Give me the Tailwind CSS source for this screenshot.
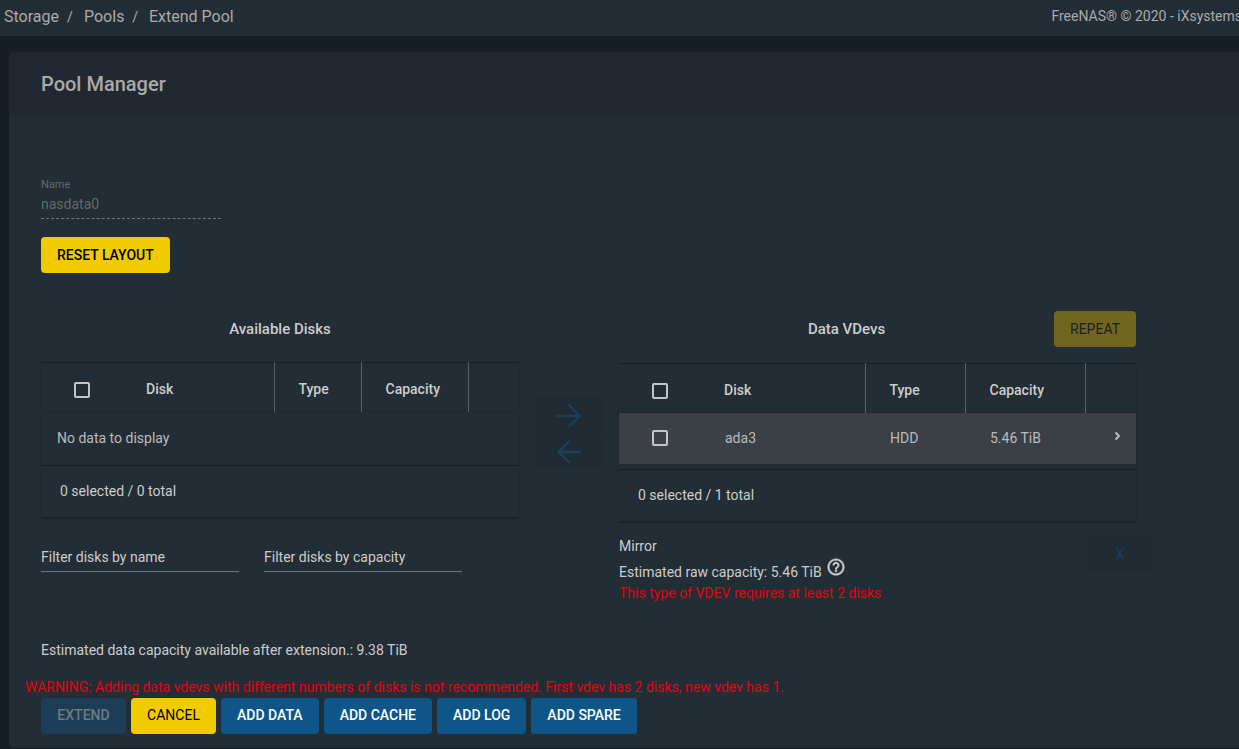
<!DOCTYPE html>
<html lang="en">
<head>
    <meta charset="UTF-8">
    <meta name="viewport" content="width=device-width, initial-scale=1.0">
    <title>FreeNAS - Extend Pool</title>
    <script src="https://cdn.jsdelivr.net/npm/@tailwindcss/browser@4"></script>
</head>
<body class="bg-[#171e26] min-h-screen overflow-x-hidden font-[Roboto,sans-serif] text-sm leading-5 text-[#cccccc]">
    <!-- Breadcrumb bar -->
    <header class="flex h-9 items-center justify-between overflow-hidden bg-[#232d35] pl-1 pb-[2px] text-[#aaaaaa] shadow-sm">
        <nav aria-label="Breadcrumb" class="flex text-base">
            <a href="#" class="w-20 shrink-0">Storage <span class="pl-1 text-sm">/</span></a>
            <a href="#" class="w-[65px] shrink-0">Pools <span class="pl-1 text-sm">/</span></a>
            <a href="#" class="whitespace-nowrap">Extend Pool</a>
        </nav>
        <p class="-mr-[3px] pb-[2px] whitespace-nowrap">FreeNAS® © 2020 - iXsystems</p>
    </header>

    <main class="ml-[9px] mt-4 rounded-l-md bg-[#232d35]">
        <div class="flex h-16 items-center rounded-tl-md bg-[#212831] px-8">
            <h1 class="text-xl font-medium text-[#aaaaaa]">Pool Manager</h1>
        </div>

        <div class="px-8 pt-[61px] pb-[14px]">
            <div class="flex w-[180px] flex-col">
                <label for="poolName" class="text-[11px] leading-4 text-[#646a6e]">Name</label>
                <input type="text" id="poolName" value="nasdata0" disabled class="h-[26px] border-b border-dashed border-[#71777b] pb-[3px] text-[#646a6e]">
            </div>
            <button type="button" class="mt-[18px] h-9 rounded bg-[#f0cb00] px-4 font-medium text-black">RESET LAYOUT</button>

            <div class="mt-[38px] mr-[71px] grid grid-cols-[478fr_66fr_517fr] gap-x-[17px]">
                <!-- Available disks -->
                <section>
                    <h2 class="text-center text-[15px] leading-9 font-medium">Available Disks</h2>
                    <div class="mt-[15px] shadow-[0_2px_2px_rgba(0,0,0,0.25)]">
                        <table class="w-full table-fixed border-t border-[#171e26] text-left">
                            <thead>
                                <tr class="h-[49px]">
                                    <th class="w-[81px] pt-[5px] pl-[33px]"><input type="checkbox" aria-label="Select all available disks" class="block size-4 appearance-none rounded-xs border-2 border-[#c4c4c4]"></th>
                                    <th class="border-r border-[#596066] pl-6 pt-1 font-medium">Disk</th>
                                    <th class="w-[87px] border-r border-[#596066] pl-6 pt-1 font-medium">Type</th>
                                    <th class="w-[107px] border-r border-[#596066] pl-6 pt-1 font-medium">Capacity</th>
                                    <td class="w-[51px]"></td>
                                </tr>
                            </thead>
                            <tbody>
                                <tr class="h-[54px] border-t border-[#1f272f]">
                                    <td colspan="5" class="pl-4 pb-px text-[#bbbbbb]">No data to display</td>
                                </tr>
                            </tbody>
                            <tfoot>
                                <tr class="h-[51px] border-t border-[#171e26]">
                                    <td colspan="5" class="pl-[19px]">0 selected / 0 total</td>
                                </tr>
                            </tfoot>
                        </table>
                    </div>
                    <div class="mt-[26px] flex gap-[25px]">
                        <input type="text" aria-label="Filter disks by name" placeholder="Filter disks by name" class="h-[29px] w-[198px] min-w-0 border-b border-[#6c7276] placeholder:text-[#cccccc]">
                        <input type="text" aria-label="Filter disks by capacity" placeholder="Filter disks by capacity" class="h-[29px] w-[198px] min-w-0 border-b border-[#6c7276] placeholder:text-[#cccccc]">
                    </div>
                </section>

                <!-- Move buttons -->
                <div class="flex flex-col pt-[86px]">
                    <button type="button" disabled aria-label="Add to vdev" class="flex h-9 items-center justify-center rounded bg-[#212b33] text-[#1b405a]">
                        <svg class="size-6" viewBox="0 0 24 24" fill="none" stroke="currentColor" stroke-width="2.4">
                            <path d="M0 13h23M11.500 1.500l11 11.500l-11 11"/>
                        </svg>
                    </button>
                    <button type="button" disabled aria-label="Remove from vdev" class="flex h-9 items-center justify-center rounded bg-[#212b33] text-[#1b405a]">
                        <svg class="size-6" viewBox="0 0 24 24" fill="none" stroke="currentColor" stroke-width="2.4">
                            <path d="M24 13H2M13 1.500L1.500 13l11.500 11"/>
                        </svg>
                    </button>
                </div>

                <!-- Data vdevs -->
                <section>
                    <div class="flex">
                        <h2 class="flex-1 pl-5 text-center text-[15px] leading-9 font-medium">Data VDevs</h2>
                        <button type="button" disabled class="h-9 rounded bg-[#70661f] px-4 text-[#1b211f]">REPEAT</button>
                    </div>
                    <div class="mt-4 shadow-[0_2px_2px_rgba(0,0,0,0.25)]">
                        <table class="w-full table-fixed border-t border-[#171e26] text-left">
                            <thead>
                                <tr class="h-[49px]">
                                    <th class="w-[81px] pt-[5px] pl-[33px]"><input type="checkbox" aria-label="Select all vdev disks" class="block size-4 appearance-none rounded-xs border-2 border-[#c4c4c4]"></th>
                                    <th class="border-r border-[#596066] pl-6 pt-1 font-medium">Disk</th>
                                    <th class="w-[100px] border-r border-[#596066] pl-6 pt-1 font-medium">Type</th>
                                    <th class="w-[120px] border-r border-[#596066] pl-6 pt-1 font-medium">Capacity</th>
                                    <td class="w-[51px]"></td>
                                </tr>
                            </thead>
                            <tbody>
                                <tr class="h-[51px] border-t border-[#1f272f] bg-[#3a4046] text-[#bbbbbb]">
                                    <td class="pl-[33px]"><input type="checkbox" aria-label="Select ada3" class="block size-4 appearance-none rounded-xs border-2 border-[#c4c4c4]"></td>
                                    <td class="pl-[25px]">ada3</td>
                                    <td class="pl-[25px]">HDD</td>
                                    <td class="pl-[25px]">5.46 TiB</td>
                                    <td class="pb-1">
                                        <button type="button" aria-label="Expand ada3" class="ml-[27px] block">
                                            <svg class="h-[10px] w-3" viewBox="0 0 12 10" fill="none" stroke="currentColor" stroke-width="2">
                                                <path d="M3.5 1.5L7 5L3.5 8.5"/>
                                            </svg>
                                        </button>
                                    </td>
                                </tr>
                                <tr class="h-[6px]"><td colspan="5"></td></tr>
                            </tbody>
                            <tfoot>
                                <tr class="h-[51px] border-t border-[#171e26]">
                                    <td colspan="5" class="pl-[19px]">0 selected / 1 total</td>
                                </tr>
                            </tfoot>
                        </table>
                    </div>
                    <div class="-mr-4 mt-[15px] flex items-start justify-between">
                        <div>
                            <p>Mirror</p>
                            <div class="flex h-[27px] gap-1">
                                <p class="self-end pb-px">Estimated raw capacity: 5.46 TiB</p>
                                <svg class="mt-px size-5" viewBox="0 0 24 24" fill="currentColor">
                                    <path d="M11 18h2v-2h-2v2zm1-16C6.480 2 2 6.480 2 12s4.480 10 10 10 10-4.480 10-10S17.520 2 12 2zm0 18c-4.410 0-8-3.590-8-8s3.590-8 8-8 8 3.590 8 8-3.590 8-8 8zm0-14c-2.210 0-4 1.790-4 4h2c0-1.100.9-2 2-2s2 .9 2 2c0 2-3 1.750-3 5h2c0-2.250 3-2.500 3-5 0-2.210-1.790-4-4-4z" stroke="currentColor" stroke-width="0.500"/>
                                </svg>
                            </div>
                            <p class="text-[#e2040f]">This type of VDEV requires at least 2 disks</p>
                        </div>
                        <button type="button" disabled class="h-9 w-16 rounded bg-[#212b33] font-medium text-[#1b405a]">X</button>
                    </div>
                </section>
            </div>

            <p class="mt-[37px]">Estimated data capacity available after extension.: 9.38 TiB</p>
            <p class="-ml-4 mt-[17px] leading-[21px] text-[#e2040f]">WARNING: Adding data vdevs with different numbers of disks is not recommended. First vdev has 2 disks, new vdev has 1.</p>

            <div class="flex flex-wrap gap-[5px]">
                <button type="button" disabled class="h-9 min-w-[85px] rounded bg-[#1c3d55] px-4 pb-px font-medium text-[#6f7b84]">EXTEND</button>
                <button type="button" class="h-9 min-w-[85px] rounded bg-[#f0cb00] px-4 pb-px text-black">CANCEL</button>
                <button type="button" class="h-9 rounded bg-[#0d5687] px-4 pb-px font-medium text-white">ADD DATA</button>
                <button type="button" class="h-9 rounded bg-[#0d5687] px-4 pb-px font-medium text-white">ADD CACHE</button>
                <button type="button" class="h-9 rounded bg-[#0d5687] px-4 pb-px font-medium text-white">ADD LOG</button>
                <button type="button" class="h-9 rounded bg-[#0d5687] px-4 pb-px font-medium text-white">ADD SPARE</button>
            </div>
        </div>
    </main>
</body>
</html>
